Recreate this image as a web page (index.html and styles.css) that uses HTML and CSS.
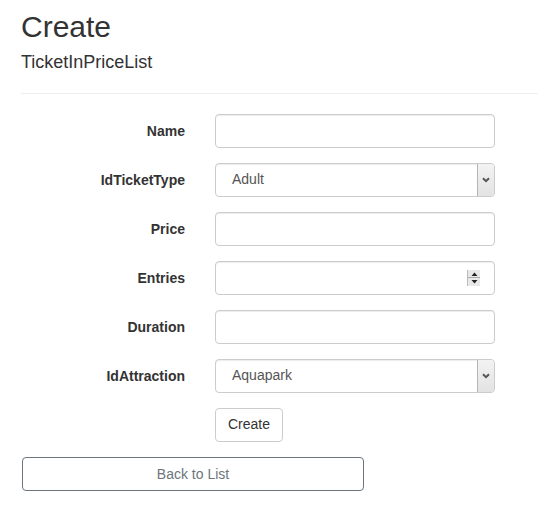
FILE: index.html
```html
<!DOCTYPE html>
<html>
<head>
<meta charset="utf-8">
<title>Create</title>
<link rel="stylesheet" href="styles.css">
</head>
<body>
<div class="container">
  <h2 class="title">Create</h2>
  <h4 class="subtitle">TicketInPriceList</h4>
  <hr class="divider">
  <form class="form">
    <div class="group">
      <label class="label">Name</label>
      <div class="field"><input class="control" type="text"></div>
    </div>
    <div class="group">
      <label class="label">IdTicketType</label>
      <div class="field select-wrap">
        <select class="control select"><option>Adult</option></select>
        <span class="select-arrow"><svg width="8" height="6" viewBox="0 0 8 6"><path d="M1 1.2 L4 4.2 L7 1.2" fill="none" stroke="#555" stroke-width="2"/></svg></span>
      </div>
    </div>
    <div class="group">
      <label class="label">Price</label>
      <div class="field"><input class="control" type="text"></div>
    </div>
    <div class="group">
      <label class="label">Entries</label>
      <div class="field spin-wrap">
        <input class="control" type="text">
        <span class="spinner">
          <span class="spin-btn"><svg width="7" height="4" viewBox="0 0 7 4"><path d="M0.5 4 L3.5 0.5 L6.5 4 Z" fill="#222"/></svg></span>
          <span class="spin-btn"><svg width="7" height="4" viewBox="0 0 7 4"><path d="M0.5 0 L3.5 3.5 L6.5 0 Z" fill="#222"/></svg></span>
        </span>
      </div>
    </div>
    <div class="group">
      <label class="label">Duration</label>
      <div class="field"><input class="control" type="text"></div>
    </div>
    <div class="group">
      <label class="label">IdAttraction</label>
      <div class="field select-wrap">
        <select class="control select"><option>Aquapark</option></select>
        <span class="select-arrow"><svg width="8" height="6" viewBox="0 0 8 6"><path d="M1 1.2 L4 4.2 L7 1.2" fill="none" stroke="#555" stroke-width="2"/></svg></span>
      </div>
    </div>
    <div class="group">
      <span class="label"></span>
      <div class="field"><button class="btn" type="button">Create</button></div>
    </div>
  </form>
  <div class="back-wrap">
    <a class="back" href="#">Back to List</a>
  </div>
</div>
</body>
</html>
```
FILE: styles.css
```css
* { box-sizing: border-box; }
html, body { margin: 0; padding: 0; background: #fff; }
body {
  font-family: "Liberation Sans", Arial, Helvetica, sans-serif;
  font-size: 14px;
  line-height: 1.428571;
  color: #333;
}
.container { padding: 10px 0 0 21px; }
.title {
  margin: 0 0 10px;
  font-size: 30px;
  font-weight: 500;
  line-height: 1.1;
}
.subtitle {
  margin: 10px 0 10px;
  font-size: 18px;
  font-weight: 500;
  line-height: 1.1;
}
.divider {
  margin: 20px 0 20px;
  border: 0;
  border-top: 1px solid #eee;
  height: 0;
}
.form { margin: 0; }
.group {
  display: flex;
  gap: 30px;
  margin-bottom: 15px;
}
.label {
  width: 164px;
  flex: none;
  text-align: right;
  font-weight: bold;
  padding-top: 7px;
  line-height: 20px;
}
.field { position: relative; width: 280px; }
.control {
  display: block;
  width: 280px;
  height: 34px;
  padding: 6px 12px;
  font-family: inherit;
  font-size: 14px;
  line-height: 1.428571;
  color: #555;
  background: #fff;
  border: 1px solid #ccc;
  border-radius: 4px;
  box-shadow: inset 0 1px 1px rgba(0,0,0,.075);
  outline: none;
}
.select {
  -webkit-appearance: none;
  appearance: none;
  padding-left: 16px;
}
.select-arrow {
  position: absolute;
  top: 1px;
  right: 1px;
  width: 17px;
  height: 32px;
  display: flex;
  align-items: center;
  justify-content: center;
  background: linear-gradient(#f3f3f3, #e3e3e3);
  border-left: 1px solid #b5b5b5;
  border-radius: 0 3px 3px 0;
  pointer-events: none;
}
.spinner {
  position: absolute;
  top: 9px;
  right: 15px;
  width: 13px;
  height: 16px;
  display: flex;
  flex-direction: column;
  background: #e8e8e8;
  border-left: 1px solid #bbb;
  pointer-events: none;
}
.spin-btn {
  flex: 1;
  display: flex;
  align-items: center;
  justify-content: center;
}
.spin-btn + .spin-btn { border-top: 1px solid #aaa; }
.btn {
  display: inline-block;
  height: 34px;
  padding: 6px 12px;
  font-family: inherit;
  font-size: 14px;
  line-height: 1.428571;
  color: #333;
  background: #fff;
  border: 1px solid #ccc;
  border-radius: 4px;
}
.back-wrap { margin-top: 2px; padding-left: 1px; }
.back {
  display: block;
  width: 342px;
  height: 34px;
  line-height: 32px;
  text-align: center;
  color: #6c757d;
  text-decoration: none;
  border: 1px solid #6c757d;
  border-radius: 4px;
}
```
